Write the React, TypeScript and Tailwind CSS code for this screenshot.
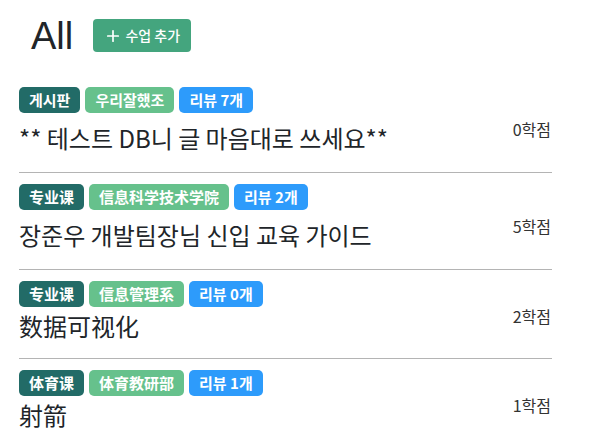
import { Plus } from "lucide-react";

type Course = {
  kind: string;
  dept: string;
  reviews: number;
  title: string;
  credit: number;
  zh?: boolean;
};

const courses: Course[] = [
  { kind: "게시판", dept: "우리잘했조", reviews: 7, title: "** 테스트 DB니 글 마음대로 쓰세요**", credit: 0 },
  { kind: "专业课", dept: "信息科学技术学院", reviews: 2, title: "장준우 개발팀장님 신입 교육 가이드", credit: 5 },
  { kind: "专业课", dept: "信息管理系", reviews: 0, title: "数据可视化", credit: 2, zh: true },
  { kind: "体育课", dept: "体育教研部", reviews: 1, title: "射箭", credit: 1, zh: true },
];

function Badge({ color, children }: { color: string; children: React.ReactNode }) {
  return (
    <span className={`${color} h-[26px] px-[10px] rounded-[5px] text-white text-[15px] font-bold leading-[26px]`}>
      {children}
    </span>
  );
}

function CourseRow({ course }: { course: Course }) {
  return (
    <div
      className={
        course.zh
          ? "w-[533px] border-b border-[#b4b4b4] pt-[11px] pb-[16px] first:pt-0"
          : "w-[533px] border-b border-[#b4b4b4] pt-[11px] pb-[18px] first:pt-0"
      }
    >
      <div className="flex gap-[5px]">
        <Badge color="bg-[#226b67]">{course.kind}</Badge>
        <Badge color="bg-[#66c18c]">{course.dept}</Badge>
        <Badge color="bg-[#2d9bfb]">리뷰 {course.reviews}개</Badge>
      </div>
      <div className={course.zh ? "flex justify-between items-start mt-[3px]" : "flex justify-between items-start mt-[9px]"}>
        <div
          className={
            course.zh
              ? "text-[24px] leading-[32px] text-[#212529] font-['Noto_Sans_CJK_SC',sans-serif]"
              : "text-[24px] leading-[32px] text-[#212529]"
          }
        >
          {course.title}
        </div>
        <div className={course.zh ? "text-[16px] leading-6 text-[#333] mt-[-6px] mr-px" : "text-[16px] leading-6 text-[#333] mt-[-5px] mr-px"}>
          {course.credit}학점
        </div>
      </div>
    </div>
  );
}

export default function App() {
  return (
    <div className="w-[598px] h-[446px] overflow-hidden bg-white pl-[19px] pt-[19px] font-['Noto_Sans_CJK_KR','Noto_Sans_CJK_SC',sans-serif]">
      {/* Header */}
      <div className="flex items-center h-[33px]">
        <h1 className="ml-3 text-[38px] leading-none text-[#212529] font-['Liberation_Sans',sans-serif]">All</h1>
        <button className="ml-[20px] h-[33px] w-[98px] rounded-[4px] bg-[#44a57e] text-white text-[14px] font-medium flex items-center justify-center gap-[3px]">
          <Plus size={18} strokeWidth={2.25} />
          수업 추가
        </button>
      </div>

      {/* Course list */}
      <div className="mt-[35px]">
        {courses.map((c, i) => (
          <CourseRow key={i} course={c} />
        ))}
      </div>
    </div>
  );
}
